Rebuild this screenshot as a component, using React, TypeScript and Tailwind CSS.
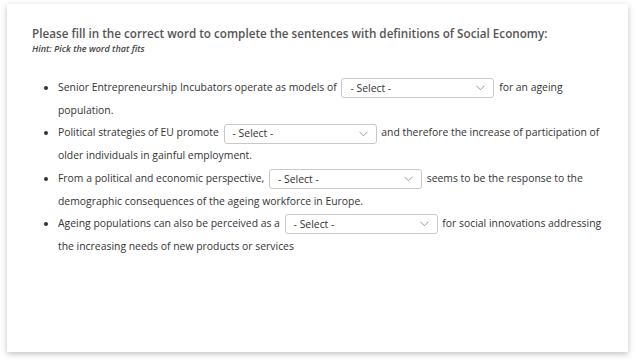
import React from "react";

const Select = () => (
  <span className="relative mx-[2px] inline-flex h-[20px] w-[153px] items-center rounded-[3px] border border-[#c8c8c8] bg-white pl-[8px] align-middle text-[10.4px] leading-none text-[#333]">
    - Select -
    <svg
      className="absolute right-[8px] top-[6px]"
      width="9"
      height="6"
      viewBox="0 0 9 6"
      fill="none"
    >
      <path d="M0.5 0.8L4.5 4.8L8.5 0.8" stroke="#9a9a9a" strokeWidth="1" />
    </svg>
  </span>
);

const items: [string, string][] = [
  ["Senior Entrepreneurship Incubators operate as models of", "for an ageing population."],
  [
    "Political strategies of EU promote",
    "and therefore the increase of participation of older individuals in gainful employment.",
  ],
  [
    "From a political and economic perspective,",
    "seems to be the response to the demographic consequences of the ageing workforce in Europe.",
  ],
  [
    "Ageing populations can also be perceived as a",
    "for social innovations addressing the increasing needs of new products or services",
  ],
];

export default function App() {
  return (
    <div className="h-[364px] w-[636px] bg-white pl-[7px] pt-[4px] font-['Open_Sans',sans-serif]">
      <div className="h-[348px] w-[621px] bg-white px-[25px] pt-[21px] shadow-[0_2px_6px_rgba(0,0,0,0.25)]">
        <h2 className="text-[11.7px] font-semibold leading-[17px] text-[#555]">
          Please fill in the correct word to complete the sentences with definitions of Social Economy:
        </h2>
        <p className="mt-[1px] text-[9px] font-semibold italic leading-[12px] text-[#444]">
          Hint: Pick the word that fits
        </p>
        <ul className="mt-[21px] list-disc pl-[26px] text-[10.4px] leading-[22.7px] text-[#333]">
          {items.map(([before, after], i) => (
            <li key={i}>
              {before} <Select /> {after}
            </li>
          ))}
        </ul>
      </div>
    </div>
  );
}
